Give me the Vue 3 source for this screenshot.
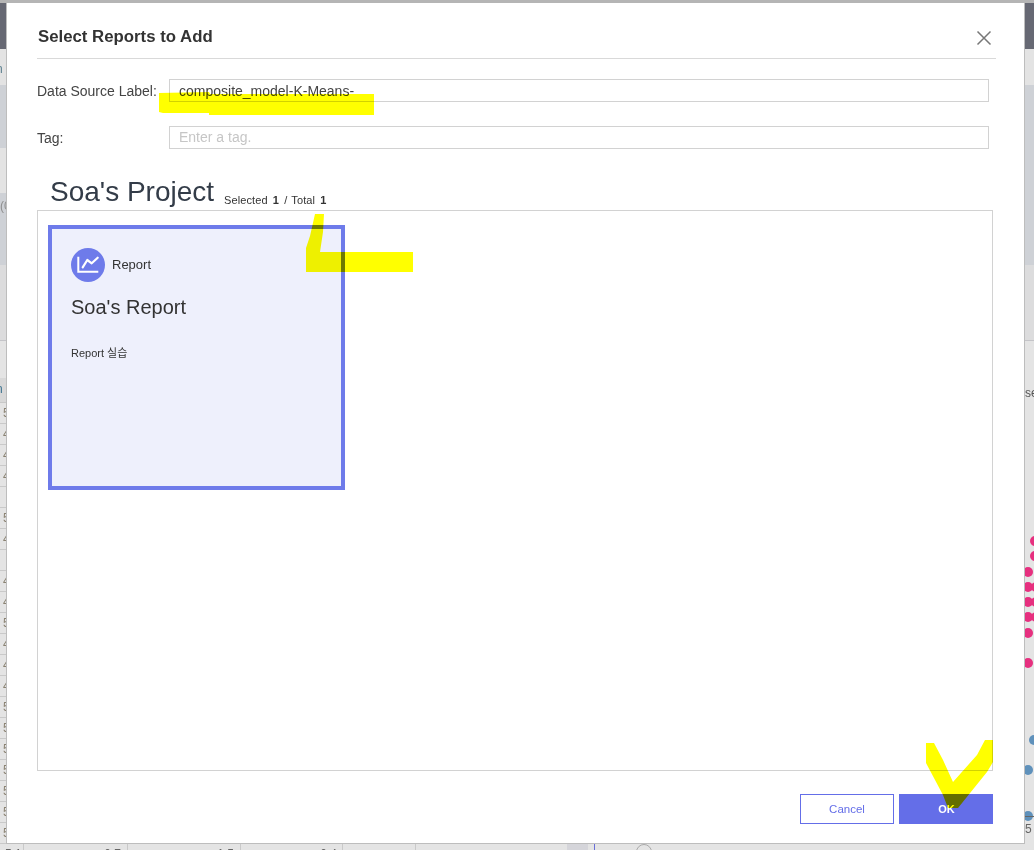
<script setup>
const rowValues = ['5.1','4.9','4.7','4.6','','5.4','4.6','','4.4','4.9','5.4','4.8','4.8','4.3','5.8','5.7','5.4','5.1','5.7','5.1','5.4']
const dots = [
  { x: 1035, y: 541, c: '#e6307f' }, { x: 1035, y: 556, c: '#e6307f' },
  { x: 1028, y: 572, c: '#e6307f' }, { x: 1028, y: 587, c: '#e6307f' },
  { x: 1036, y: 587, c: '#e6307f' }, { x: 1028, y: 602, c: '#e6307f' },
  { x: 1036, y: 602, c: '#e6307f' }, { x: 1028, y: 617, c: '#e6307f' },
  { x: 1036, y: 617, c: '#e6307f' }, { x: 1028, y: 633, c: '#e6307f' },
  { x: 1028, y: 663, c: '#e6307f' }, { x: 1034, y: 740, c: '#5f91bb' },
  { x: 1028, y: 770, c: '#5f91bb' }, { x: 1028, y: 816, c: '#5f91bb' }
]
const dotStyle = (d) => ({ left: d.x - 5 + 'px', top: d.y - 5 + 'px', background: d.c })
</script>

<template>
  <div class="page">
    <div class="backdrop">
      <div class="top-line"></div>
      <div class="nav"></div>
      <div class="tabs"><span class="frag frag-n">n</span></div>
      <div class="toolbar">
        <div class="toolbar-a"></div>
        <div class="toolbar-b"></div>
        <div class="toolbar-c"><span class="frag frag-zero">(0</span></div>
      </div>
      <div class="strip"></div>
      <div class="section"><span class="frag-se">se</span></div>
      <div class="table-head"><span class="frag frag-n2">n</span></div>
      <div v-for="(v, i) in rowValues" :key="i" class="row">{{ v }}</div>
      <div class="last-row">
        <span class="cell c1">5.1</span>
        <span class="cell c2">0.7</span>
        <span class="cell c3">1.5</span>
        <span class="cell c4">0.4</span>
        <span class="cell c5">+</span>
        <span class="patch"></span>
        <span class="blue-line"></span>
        <span class="ring"></span>
      </div>
      <span v-for="(d, i) in dots" :key="'d' + i" class="dot" :style="dotStyle(d)"></span>
      <span class="tick"></span>
      <span class="tick-label">5</span>
    </div>

    <div class="modal">
      <header class="modal-head">
        <h1>Select Reports to Add</h1>
        <svg class="close" width="16" height="16" viewBox="0 0 16 16">
          <path d="M1.5 1.5 L14.5 14.5 M14.5 1.5 L1.5 14.5" stroke="#777" stroke-width="1.5" fill="none" />
        </svg>
      </header>

      <div class="form-row first">
        <label>Data Source Label:</label>
        <div class="input">composite_model-K-Means-</div>
      </div>
      <div class="form-row second">
        <label>Tag:</label>
        <div class="input placeholder">Enter a tag.</div>
      </div>

      <div class="project-head">
        <span class="project-name">Soa's Project</span>
        <span class="counts">Selected <b>1</b> / Total <b>1</b></span>
      </div>

      <div class="list">
        <div class="card">
          <div class="card-type">
            <span class="badge">
              <svg width="34" height="34" viewBox="0 0 34 34" fill="none">
                <path d="M7.3 8.7 V23.7 H27.3" stroke="#fff" stroke-width="2" />
                <path d="M11.7 19.3 L16.3 12 L20.7 15.3 L26.7 9.7" stroke="#fff" stroke-width="2.2" stroke-linecap="round" stroke-linejoin="round" />
              </svg>
            </span>
            <span class="type-label">Report</span>
          </div>
          <div class="card-title">Soa's Report</div>
          <div class="card-desc">Report 실습</div>
        </div>
      </div>

      <footer class="modal-foot">
        <button class="btn ghost">Cancel</button>
        <button class="btn solid">OK</button>
      </footer>
    </div>

    <svg class="scribble" width="1034" height="850" viewBox="0 0 1034 850">
      <path fill="#ffff00" d="M159 93 L209 92 L210 94 L374 94 L374 115 L209 115 L209 113 L163 113 L159 112 Z" />
      <path fill="#ffff00" d="M315 214 L324 214 L323 232 L320 252 L413 252 L413 272 L306 272 L306 248 L310 236 Z" />
      <path fill="#ffff00" d="M926 743 L934 743 L943 760 L953 782 L977 755 L985 740 L993 740 L993 762 L987 772 L958 808 L948 808 L943 795 L926 763 Z" />
    </svg>
  </div>
</template>

<style>
html, body { margin: 0; padding: 0; background: #e4e4e4; }
</style>

<style scoped>
.page {
  position: relative;
  width: 1034px;
  height: 850px;
  overflow: hidden;
  font-family: "Liberation Sans", Arial, "Noto Sans CJK KR", sans-serif;
  color: #333;
}
.backdrop {
  position: relative;
  display: flex;
  flex-direction: column;
  height: 850px;
  background: #e4e4e4;
}
.top-line { height: 3px; background: #b5b5b5; }
.nav { height: 46px; background: #666873; }
.tabs { position: relative; height: 36px; background: #e3e3e3; }
.toolbar { height: 180px; background: #ced1d6; display: flex; flex-direction: column; position: relative; }
.toolbar-a { height: 63px; }
.toolbar-b { height: 45px; width: 7px; background: #e3e3e3; }
.toolbar-c { position: relative; flex: 1; }
.strip { height: 76px; background: #dcdcdd; border-bottom: 1px solid #c4c4c8; box-sizing: border-box; }
.section { position: relative; height: 37px; background: #e4e4e4; }
.table-head { position: relative; width: 417px; height: 25px; background: #d8d8d8; border-bottom: 1px solid #c8c8c8; box-sizing: border-box; }
.row {
  width: 417px;
  height: 21px;
  box-sizing: border-box;
  flex: none;
  padding-left: 3px;
  border-bottom: 1px solid #c9c9c9;
  font-size: 12px;
  line-height: 20px;
  color: #8a8272;
}
.frag { position: absolute; font-size: 12px; line-height: 14px; }
.frag-n { left: -4px; top: 13px; color: #5b7f8e; }
.frag-zero { left: 0; top: 6px; color: #8e8e8e; }
.frag-n2 { left: -4px; top: 4px; color: #3f7490; }
.frag-se { position: absolute; left: 1025px; top: 45px; font-size: 12px; line-height: 14px; color: #555; }
.last-row { position: relative; flex: 1; font-size: 12px; color: #666; }
.cell {
  position: absolute;
  top: 0;
  height: 14px;
  line-height: 14px;
  padding-top: 3px;
}
.c1 { left: 5px; width: 18px; border-right: 1px solid #c9c9c9; }
.c2 { left: 25px; width: 96px; padding-right: 6px; text-align: right; border-right: 1px solid #c9c9c9; }
.c3 { left: 128px; width: 106px; padding-right: 6px; text-align: right; border-right: 1px solid #c9c9c9; }
.c4 { left: 241px; width: 96px; padding-right: 5px; text-align: right; border-right: 1px solid #c9c9c9; }
.c5 { left: 343px; width: 73px; padding-left: 18px; box-sizing: border-box; border-right: 1px solid #c9c9c9; }
.patch { position: absolute; left: 567px; top: 0; width: 21px; height: 6px; background: #d5d5da; }
.blue-line { position: absolute; left: 594px; top: 0; width: 1px; height: 6px; background: #6a6fd8; }
.ring { position: absolute; left: 636px; top: 0; width: 16px; height: 16px; border: 1px solid #aaa; border-radius: 50%; box-sizing: border-box; }
.dot { position: absolute; width: 10px; height: 10px; border-radius: 50%; }
.tick { position: absolute; left: 1024px; top: 816px; width: 10px; height: 1px; background: #666; }
.tick-label { position: absolute; left: 1025px; top: 822px; font-size: 12px; line-height: 14px; color: #666; }

.modal {
  position: absolute;
  left: 6px;
  top: 3px;
  width: 1019px;
  height: 841px;
  box-sizing: border-box;
  display: flex;
  flex-direction: column;
  padding: 0 28px 19px 30px;
  background: #fff;
  border: solid #bdbdbd;
  border-width: 0 1px 1px 1px;
}
.modal-head {
  flex: none;
  height: 56px;
  box-sizing: border-box;
  display: flex;
  align-items: center;
  justify-content: space-between;
  padding: 13px 4px 0 1px;
  border-bottom: 1px solid #d9d9d9;
}
.modal-head h1 { margin: 0; font-size: 16.8px; font-weight: 700; color: #333; }
.close { margin-top: 1px; }
.form-row { display: flex; align-items: center; margin-right: 7px; flex: none; }
.form-row.first { margin-top: 20px; }
.form-row.second { margin-top: 24px; }
.form-row label { width: 132px; flex: none; font-size: 14px; color: #444; }
.input {
  flex: 1;
  height: 23px;
  box-sizing: border-box;
  padding-left: 9px;
  border: 1px solid #d2d2d2;
  font-size: 14px;
  line-height: 22px;
  color: #444;
}
.input.placeholder { color: #c6c6c6; line-height: 21px; }
.project-head {
  flex: none;
  display: flex;
  align-items: flex-end;
  gap: 10px;
  height: 61px;
  padding-left: 13px;
  box-sizing: border-box;
}
.project-name { font-size: 28px; line-height: 32px; padding-bottom: 2px; color: #333c48; }
.counts { font-size: 11px; line-height: 13px; padding-bottom: 3px; color: #333; word-spacing: 1px; letter-spacing: 0.1px; }
.counts b { color: #333; margin: 0 1px; }
.list {
  flex: 1;
  min-height: 0;
  width: 956px;
  box-sizing: border-box;
  padding: 14px 10px;
  border: 1px solid #d2d2d2;
}
.card {
  width: 297px;
  height: 265px;
  box-sizing: border-box;
  padding: 19px 19px;
  border: 4px solid #6e7bea;
  background: #eef0fc;
}
.card-type { display: flex; align-items: center; gap: 7px; }
.badge { display: flex; width: 34px; height: 34px; border-radius: 50%; background: #6e7bea; }
.type-label { font-size: 13px; color: #333; margin-top: -2px; }
.card-title { margin-top: 13px; font-size: 20px; line-height: 24px; color: #333; }
.card-desc { margin-top: 27px; font-size: 11px; line-height: 14px; color: #333; }
.modal-foot {
  flex: none;
  display: flex;
  justify-content: flex-end;
  gap: 5px;
  width: 956px;
  margin-top: 23px;
}
.btn {
  width: 94px;
  height: 30px;
  box-sizing: border-box;
  padding: 0;
  font-family: inherit;
  font-size: 11px;
  border: 1px solid #646ee8;
}
.btn.ghost { background: #fff; color: #646ee8; font-size: 11.5px; font-weight: 400; }
.btn.solid { background: #646ee8; color: #fff; font-weight: 700; padding-left: 1px; }
.scribble { position: absolute; left: 0; top: 0; mix-blend-mode: multiply; pointer-events: none; }
</style>
